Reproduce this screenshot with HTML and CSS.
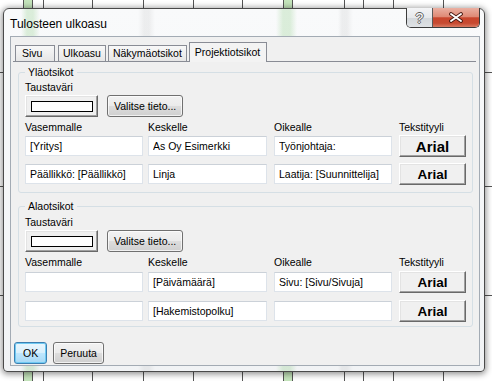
FILE: index.html
```html
<!DOCTYPE html>
<html lang="fi">
  <head>
    <meta charset="UTF-8" />
    <title>Tulosteen ulkoasu</title>
    <link rel="stylesheet" href="styles.css">
  </head>
  <body>
    <div class="ikkuna">
      <div class="otsikkopalkki">
        <span class="otsikko">Tulosteen ulkoasu</span>
        <div class="ikkunanapit">
          <span class="ohje">?</span>
          <span class="sulje">
            <svg width="14" height="11" viewBox="0 0 14 11">
              <path d="M2 2 L12 9 M12 2 L2 9" stroke="#4a1a12" stroke-width="3.8" stroke-linecap="round" fill="none" />
              <path d="M2 2 L12 9 M12 2 L2 9" stroke="#fff" stroke-width="1.9" stroke-linecap="round" fill="none" />
            </svg>
          </span>
        </div>
      </div>
      <div class="sisalto">
        <div class="valilehdet">
          <span class="valilehti eka">Sivu</span>
          <span class="valilehti">Ulkoasu</span>
          <span class="valilehti">Näkymäotsikot</span>
          <span class="valilehti valittu">Projektiotsikot</span>
        </div>
        <div class="paneeli">
          <!-- Yläotsikot -->
          <fieldset class="ryhma">
            <legend>Yläotsikot</legend>
            <div class="otsake">Taustaväri</div>
            <div class="varirivi">
              <button class="varinappi"><span class="varilaatikko"></span></button>
              <button class="nappi">Valitse tieto...</button>
            </div>
            <div class="kentat">
              <span>Vasemmalle</span>
              <span>Keskelle</span>
              <span>Oikealle</span>
              <span>Tekstityyli</span>
              <input type="text" class="kentta" value="[Yritys]" />
              <input type="text" class="kentta" value="As Oy Esimerkki" />
              <input type="text" class="kentta" value="Työnjohtaja:" />
              <button class="fonttinappi iso">Arial</button>
              <input type="text" class="kentta" value="Päällikkö: [Päällikkö]" />
              <input type="text" class="kentta" value="Linja" />
              <input type="text" class="kentta" value="Laatija: [Suunnittelija]" />
              <button class="fonttinappi">Arial</button>
            </div>
          </fieldset>
          <!-- Alaotsikot -->
          <fieldset class="ryhma ala">
            <legend>Alaotsikot</legend>
            <div class="otsake">Taustaväri</div>
            <div class="varirivi">
              <button class="varinappi"><span class="varilaatikko"></span></button>
              <button class="nappi">Valitse tieto...</button>
            </div>
            <div class="kentat">
              <span>Vasemmalle</span>
              <span>Keskelle</span>
              <span>Oikealle</span>
              <span>Tekstityyli</span>
              <input type="text" class="kentta" value="" />
              <input type="text" class="kentta" value="[Päivämäärä]" />
              <input type="text" class="kentta" value="Sivu: [Sivu/Sivuja]" />
              <button class="fonttinappi">Arial</button>
              <input type="text" class="kentta" value="" />
              <input type="text" class="kentta" value="[Hakemistopolku]" />
              <input type="text" class="kentta" value="" />
              <button class="fonttinappi">Arial</button>
            </div>
          </fieldset>
        </div>
        <div class="alanapit">
          <button class="nappi oletus">OK</button>
          <button class="nappi">Peruuta</button>
        </div>
      </div>
    </div>
  </body>
</html>
```

FILE: styles.css
```css
/* Taustalla näkyy taulukko, jonka päällä dialogi on */
* {
  box-sizing: border-box;
}
body {
  margin: 0;
  height: 381px;
  position: relative;
  overflow: hidden;
  font-family: "Liberation Sans", Arial, sans-serif;
  font-size: 10.5px;
  color: #000;
  background-color: #fff;
  background-image:
    linear-gradient(to right, transparent 23px, #555 23px 24px, #c4e4bb 24px 32px, #555 32px 33px,
      transparent 33px 43px, #555 43px 44px, transparent 44px 92px, #555 92px 93px,
      transparent 93px 143px, #555 143px 144px, transparent 144px 193px, #555 193px 194px,
      transparent 194px 242px, #555 242px 243px, transparent 243px 283px, #555 283px 284px,
      #c4e4bb 284px 292px, #555 292px 293px, transparent 293px 344px, #555 344px 345px,
      transparent 345px 363px, #555 363px 364px, transparent 364px 393px, #555 393px 394px,
      transparent 394px 443px, #555 443px 444px, transparent 444px),
    linear-gradient(to bottom, transparent 72px, #555 72px 73px, transparent 73px 186px,
      #555 186px 187px, transparent 187px 295px, #555 295px 296px, transparent 296px);
}

/* Ikkuna */
.ikkuna {
  position: absolute;
  left: 3px;
  top: 8px;
  width: 482px;
  height: 364px;
  display: flex;
  flex-direction: column;
  padding: 0 4px 5px 6px;
  border: 1px solid #4a4a4a;
  border-radius: 6px 6px 4px 4px;
  background:
    linear-gradient(to right, rgba(110, 190, 100, 0) 17px, rgba(110, 190, 100, .22) 23px 29px,
      rgba(110, 190, 100, 0) 36px, rgba(0, 0, 0, 0) 134px, rgba(0, 0, 0, .05) 140px 145px,
      rgba(0, 0, 0, 0) 151px, rgba(110, 190, 100, 0) 272px, rgba(110, 190, 100, .22) 279px 286px,
      rgba(110, 190, 100, 0) 293px, rgba(0, 0, 0, 0) 334px, rgba(0, 0, 0, .05) 338px 343px,
      rgba(0, 0, 0, 0) 349px),
    linear-gradient(#f9fafb, #f1f3f5);
  box-shadow: 0 1px 6px 1px rgba(0, 0, 0, .45);
}
.otsikkopalkki {
  flex: none;
  height: 27px;
  display: flex;
  justify-content: space-between;
  align-items: flex-start;
}
.otsikko {
  font-size: 12px;
  line-height: 15px;
  padding-top: 8px;
}
.ikkunanapit {
  display: flex;
  height: 20px;
  margin-top: -1px;
  border: 1px solid #3c3c3c;
  border-top: none;
  border-radius: 0 0 5px 5px;
  overflow: hidden;
}
.ohje {
  width: 26px;
  display: flex;
  justify-content: center;
  align-items: center;
  border-right: 1px solid #5a5a5a;
  background: linear-gradient(#f3f4f6 0%, #e6e8eb 50%, #d3d7db 52%, #dfe2e5 100%);
  font-size: 14px;
  line-height: 14px;
  color: #fafafa;
  text-shadow: 1px 0 0 #5c5c5c, -1px 0 0 #5c5c5c, 0 1px 0 #5c5c5c, 0 -1px 0 #5c5c5c;
}
.sulje {
  width: 46px;
  display: flex;
  justify-content: center;
  align-items: center;
  background: linear-gradient(#eab0a2 0%, #df8a76 45%, #c9462d 52%, #c74a31 80%, #d97a62 100%);
}

/* Asiakasalue */
.sisalto {
  flex: 1;
  display: flex;
  flex-direction: column;
  border: 1px solid #a3abb4;
  background: #f0f0f0;
}
.valilehdet {
  flex: none;
  height: 24px;
  display: flex;
  align-items: flex-end;
  padding-left: 4px;
}
.valilehti {
  height: 16px;
  padding: 1px 4px 0;
  margin-right: 2px;
  line-height: 13px;
  border: 1px solid #898c95;
  border-bottom: none;
  background: linear-gradient(#f8f8f8, #e6e6e6);
  white-space: nowrap;
}
.valilehti.eka {
  width: 40px;
  padding-left: 6px;
  margin-right: 3px;
}
.valilehti.valittu {
  position: relative;
  z-index: 1;
  height: 20px;
  margin-bottom: -1px;
  padding: 3px 6px 0 5px;
  background: #f3f3f3;
}
.paneeli {
  flex: 1;
  margin: 0 3px 0 2px;
  padding: 0 3px 0 5px;
  border-top: 1px solid #898c95;
}

/* Ryhmät */
.ryhma {
  margin: 4px 0 0;
  padding: 2px 6px 7px;
  min-width: 0;
  border: 1px solid #d5dfe5;
  border-radius: 3px;
}
.ryhma.ala {
  margin-top: 7px;
  padding: 3px 6px 4px;
}
.ryhma legend {
  padding: 0 3px;
  line-height: 13px;
}
.otsake {
  line-height: 13px;
}
.varirivi {
  display: flex;
  gap: 9px;
  margin-top: 1px;
}
.kentat {
  display: grid;
  grid-template-columns: 123px 126px 125px 67px;
  grid-template-rows: 14px 28px 22px;
  align-items: start;
  margin-top: 4px;
  line-height: 13px;
}
.ala .kentat {
  grid-template-rows: 15px 29px 22px;
}
.kentta {
  width: 118px;
  height: 20px;
  margin: 1px 0 0;
  padding: 0 4px;
  border: 1px solid #dde3ea;
  border-top-color: #cbd1d8;
  background: #fff;
  font: inherit;
  color: #000;
  outline: none;
}
.kentat .kentta:nth-of-type(3n+2) {
  width: 119px;
}

/* Napit */
button {
  font: inherit;
  color: #000;
  margin: 0;
}
.nappi {
  height: 22px;
  padding: 0 6px;
  border: 1px solid #707070;
  border-radius: 3px;
  background: linear-gradient(#f2f2f2 0%, #ebebeb 48%, #dddddd 52%, #cfcfcf 100%);
  box-shadow: inset 0 0 0 1px rgba(255, 255, 255, .7);
}
.nappi.oletus {
  padding: 0 8px;
  border-color: #3c7fb1;
  background: linear-gradient(#eaf6fd 0%, #d9f0fc 48%, #bee6fd 52%, #a7d9f5 100%);
  box-shadow: inset 0 0 0 1px #6fcaf2;
}
.varinappi,
.fonttinappi {
  border: 1px solid;
  border-color: #fff #696969 #696969 #fff;
  background: #f0f0f0;
  box-shadow: inset -1px -1px 0 #a0a0a0, inset 1px 1px 0 #e3e3e3;
}
.varinappi {
  width: 73px;
  height: 22px;
  padding: 0;
  display: flex;
  justify-content: center;
  align-items: center;
}
.varilaatikko {
  width: 62px;
  height: 11px;
  border: 1px solid #000;
  background: #fff;
}
.fonttinappi {
  width: 67px;
  height: 22px;
  padding: 0;
  font-weight: bold;
  font-size: 13.5px;
}
.fonttinappi.iso {
  font-size: 15px;
}
.alanapit {
  flex: none;
  display: flex;
  gap: 6px;
  height: 23px;
  padding-left: 3px;
}
```
